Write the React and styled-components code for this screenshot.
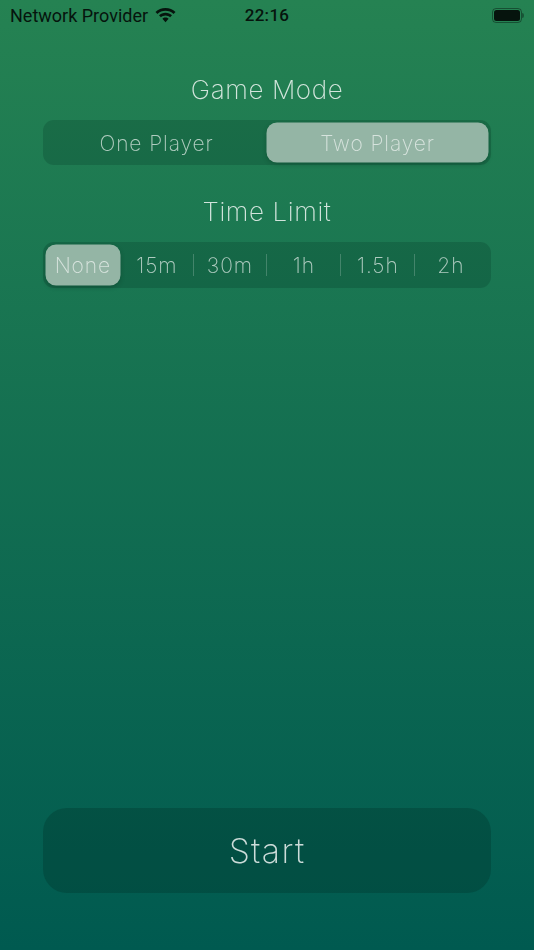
import React from 'react'
import styled, { createGlobalStyle } from 'styled-components'

const GlobalStyle = createGlobalStyle`
    html, body {
        margin: 0;
        padding: 0;
    }
`

const Screen = styled.div`
    width: 534px;
    height: 950px;
    display: flex;
    flex-direction: column;
    overflow: hidden;
    background: linear-gradient(180deg, #258252 0%, #005a50 100%);
    font-family: 'Inter', sans-serif;
    font-weight: 200;
`

const StatusBar = styled.div`
    height: 30px;
    display: grid;
    grid-template-columns: 1fr auto 1fr;
    align-items: center;
    padding: 0 10px;
    font-family: 'Roboto', sans-serif;
    font-size: 18px;
    font-weight: 400;
    color: #06140d;
`

const Carrier = styled.div`
    display: flex;
    align-items: center;
    gap: 7px;
`

const Clock = styled.div`
    font-size: 17px;
    font-weight: 500;
    letter-spacing: 0.3px;
`

const Battery = styled.div`
    justify-self: end;
    position: relative;
    box-sizing: border-box;
    width: 30px;
    height: 15px;
    border: 1px solid rgba(6, 20, 13, 0.45);
    border-radius: 4px;
    padding: 1px;
    margin-right: 2px;

    &::before {
        content: '';
        display: block;
        height: 100%;
        background: #06140d;
        border-radius: 2.5px;
    }

    &::after {
        content: '';
        position: absolute;
        top: 4px;
        right: -3px;
        width: 2px;
        height: 5px;
        border-radius: 0 2px 2px 0;
        background: rgba(6, 20, 13, 0.4);
    }
`

const Content = styled.div`
    flex: 1;
    display: flex;
    flex-direction: column;
    padding: 0 43px 57px;
`

const Title = styled.h2`
    margin: 0;
    height: 38px;
    display: flex;
    align-items: center;
    justify-content: center;
    font-size: 26px;
    font-weight: 200;
    letter-spacing: 0.6px;
    color: rgba(255, 255, 255, 0.8);
    will-change: transform;
`

const GameTitle = styled(Title)`
    margin-top: 40px;
    margin-bottom: 12px;
`

const TimeTitle = styled(Title)`
    margin-top: 27px;
    margin-bottom: 12px;
`

const Segments = styled.div`
    height: ${p => p.$height}px;
    display: flex;
    align-items: center;
    padding: 0 3px;
    border-radius: 11px;
    background: rgba(0, 40, 30, 0.2);
`

const Segment = styled.div`
    position: relative;
    flex: 1;
    align-self: stretch;
    margin: 3px 0;
    display: flex;
    align-items: center;
    justify-content: center;
    padding-top: 1px;
    border-radius: 10px;
    font-size: 21px;
    letter-spacing: 0.9px;
    color: rgba(255, 255, 255, ${p => (p.$active ? 0.62 : 0.66)});
    background: ${p => (p.$active ? '#94b5a5' : 'transparent')};
    box-shadow: ${p => (p.$active ? '0 0 0 0.5px #94b5a5, 0 2px 5px rgba(0, 30, 20, 0.3)' : 'none')};
    will-change: transform;

    &::after {
        content: '';
        display: ${p => (p.$divider ? 'block' : 'none')};
        position: absolute;
        right: 0;
        top: 9px;
        bottom: 9px;
        width: 1px;
        background: rgba(255, 255, 255, 0.2);
    }
`

const Spacer = styled.div`
    flex: 1;
`

const StartButton = styled.button`
    height: 85px;
    border: none;
    border-radius: 24px;
    background: rgba(0, 40, 30, 0.26);
    font-family: inherit;
    font-size: 34px;
    font-weight: 200;
    letter-spacing: 1.3px;
    color: rgba(255, 255, 255, 0.8);
    will-change: transform;
`

const limits = ['None', '15m', '30m', '1h', '1.5h', '2h']

function WifiIcon() {
    return (
        <svg width="21" height="15" viewBox="0 0 21 15">
            <path fill="#06140d" d="M10.5 2.8c3.100 0 5.900 1.200 8 3.200L20.500 4C17.900 1.500 14.400 0 10.500 0S3.100 1.500.5 4l2 2c2.100-2 4.900-3.200 8-3.200z" />
            <path fill="#06140d" d="M10.500 7.500c1.800 0 3.400.7 4.600 1.800l1.900-2C15.300 5.700 13 4.700 10.500 4.700S5.700 5.700 4 7.300l1.900 2c1.200-1.100 2.800-1.800 4.600-1.800z" />
            <path fill="#06140d" d="M10.500 9.500c-1.200 0-2.300.5-3.100 1.200l3.100 3.600 3.100-3.600c-.8-.7-1.900-1.200-3.100-1.200z" />
        </svg>
    )
}

function App() {
    return (
        <Screen>
            <GlobalStyle />
            <StatusBar>
                <Carrier>
                    Network Provider
                    <WifiIcon />
                </Carrier>
                <Clock>22:16</Clock>
                <Battery />
            </StatusBar>
            <Content>
                <GameTitle>Game Mode</GameTitle>
                <Segments $height={45}>
                    <Segment>One Player</Segment>
                    <Segment $active>Two Player</Segment>
                </Segments>
                <TimeTitle>Time Limit</TimeTitle>
                <Segments $height={46}>
                    {limits.map((limit, i) => (
                        <Segment
                            key={limit}
                            $active={i === 0}
                            $divider={i > 0 && i < limits.length - 1}
                        >
                            {limit}
                        </Segment>
                    ))}
                </Segments>
                <Spacer />
                <StartButton>Start</StartButton>
            </Content>
        </Screen>
    )
}

export default App
